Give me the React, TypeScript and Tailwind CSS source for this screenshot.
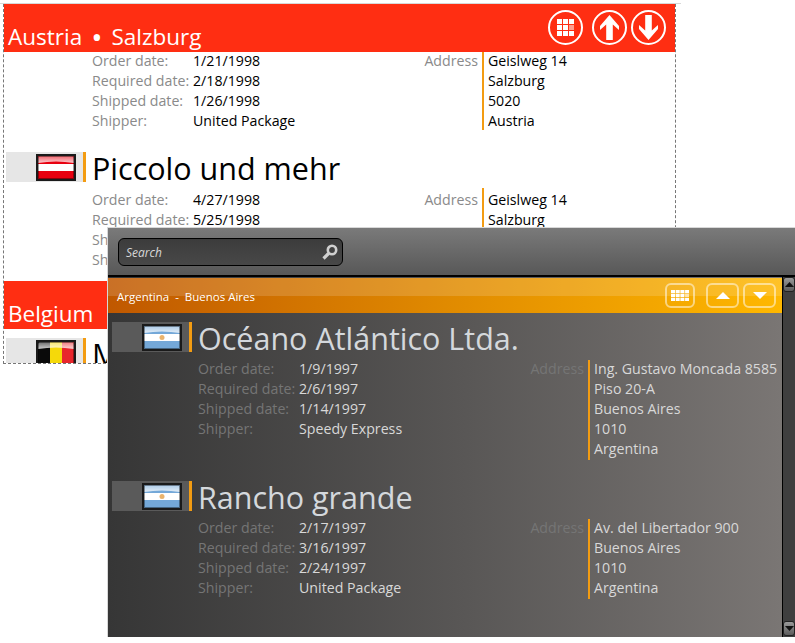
import { ReactNode } from "react";

type Order = {
  name: string;
  flag: "at" | "ar" | "be";
  dates: string[];
  shipper: string;
  address: string[];
};

const labels = ["Order date:", "Required date:", "Shipped date:", "Shipper:"];

function Flag({ type }: { type: "at" | "ar" | "be" }) {
  return (
    <svg width="40" height="27" viewBox="0 0 40 27" className="block shrink-0">
      <defs>
        <linearGradient id="gloss" x1="0" y1="0" x2="0" y2="1">
          <stop offset="0" stopColor="#fff" stopOpacity="0.4" />
          <stop offset="1" stopColor="#fff" stopOpacity="0.8" />
        </linearGradient>
      </defs>
      <rect width="40" height="27" fill="#1a1a1a" />
      {type === "at" && (
        <>
          <rect x="2" y="2" width="36" height="23" fill="#e8000f" />
          <rect x="2" y="10" width="36" height="7" fill="#fff" />
        </>
      )}
      {type === "ar" && (
        <>
          <rect x="2" y="2" width="36" height="23" fill="#74a8d8" />
          <rect x="2" y="10" width="36" height="7" fill="#fff" />
          <circle cx="20" cy="13.5" r="2.5" fill="#eab36c" />
        </>
      )}
      {type === "be" && (
        <>
          <rect x="2" y="2" width="12" height="23" fill="#0a0a0a" />
          <rect x="14" y="2" width="12" height="23" fill="#f5d90a" />
          <rect x="26" y="2" width="12" height="23" fill="#e8262c" />
        </>
      )}
      <path d="M4 2h32q2 0 2 2v5q-18 -3 -36 0v-5q0 -2 2 -2z" fill="url(#gloss)" />
      <rect x="2.5" y="2.5" width="35" height="22" fill="none" stroke="#000" strokeOpacity="0.4" />
    </svg>
  );
}

function OrderRow({ order, dark, titleOnly }: { order: Order; dark?: boolean; titleOnly?: boolean }) {
  const labelColor = dark ? "text-[#757575]" : "text-[#8a8a8a]";
  const valueColor = dark ? "text-[#d8d8d8]" : "text-black";
  return (
    <div>
      <div className="flex h-[30px] items-stretch">
        <div className={`flex w-[77px] items-center justify-end pr-[7px] ${dark ? "bg-[#5a5a5a]" : "bg-[#e6e6e6]"}`}>
          <Flag type={order.flag} />
        </div>
        <div className="w-[3px] bg-[#f39c12]" />
        <div className={`ml-[6px] whitespace-nowrap text-[30.5px] leading-[33px] ${dark ? "text-[#d4d8dc]" : "text-black"}`}>
          {order.name}
        </div>
      </div>
      {!titleOnly && (
        <DetailBlock
          order={order}
          labelColor={labelColor}
          valueColor={valueColor}
          top={dark ? "mt-[8px]" : "mt-[6px]"}
          shift={dark ? "-translate-y-[1px]" : "translate-y-[2px]"}
        />
      )}
    </div>
  );
}

function DetailBlock({
  order,
  labelColor,
  valueColor,
  top,
  shift,
}: {
  order: Order;
  labelColor: string;
  valueColor: string;
  top: string;
  shift: string;
}) {
  return (
    <div className={`ml-[86px] flex text-[14.2px] leading-[20px] ${top}`}>
      <div className={`w-[101px] whitespace-nowrap ${shift} ${labelColor}`}>
        {labels.map((l) => (
          <div key={l}>{l}</div>
        ))}
      </div>
      <div className={`w-[185px] whitespace-nowrap ${shift} ${valueColor}`}>
        {order.dates.map((d) => (
          <div key={d}>{d}</div>
        ))}
        <div>{order.shipper}</div>
      </div>
      <div className={`w-[100px] text-right ${shift} ${labelColor}`}>Address</div>
      <div className="ml-[4px] border-l-2 border-[#f39c12] pl-[4px]">
        <div className={`whitespace-nowrap ${shift} ${valueColor}`}>
          {order.address.map((a) => (
            <div key={a}>{a}</div>
          ))}
        </div>
      </div>
    </div>
  );
}

function CircleButton({ children, className }: { children: ReactNode; className?: string }) {
  return (
    <div className={`flex size-[35px] items-center justify-center rounded-full border-2 border-white ${className ?? ""}`}>
      {children}
    </div>
  );
}

function GridIcon({
  cols,
  rows,
  cell,
  cellH,
  hl,
}: {
  cols: number[];
  rows: number[];
  cell: number;
  cellH: number;
  hl: string;
}) {
  const w = cols[cols.length - 1] + cell;
  const h = rows[rows.length - 1] + cellH;
  return (
    <svg width={w} height={h} viewBox={`0 0 ${w} ${h}`} className="block">
      {rows.map((y, r) =>
        cols.map((x, c) => (
          <rect
            key={`${x}-${y}`}
            x={x}
            y={y}
            width={cell}
            height={cellH}
            fill={c === cols.length - 1 && r === 1 ? hl : "#fff"}
          />
        ))
      )}
    </svg>
  );
}

function GlossButton({ children, className }: { children: ReactNode; className?: string }) {
  return (
    <div className={`flex h-[25px] items-center justify-center rounded-[6px] border-2 border-[#ffffff80] ${className ?? ""}`}>
      {children}
    </div>
  );
}

function ScrollCap({ down }: { down?: boolean }) {
  return (
    <div className="flex h-[15px] items-center justify-center rounded-[3px] border border-[#222] bg-gradient-to-b from-[#9a9a9a] to-[#5c5c5c]">
      <svg width="9" height="5" viewBox="0 0 9 5" className="block">
        <path d={down ? "M0 0h9L4.5 5z" : "M0 5h9L4.5 0z"} fill="#111" />
      </svg>
    </div>
  );
}

const piccolo: Order = {
  name: "Piccolo und mehr",
  flag: "at",
  dates: ["4/27/1998", "5/25/1998", "5/5/1998"],
  shipper: "Speedy Express",
  address: ["Geislweg 14", "Salzburg", "5020", "Austria"],
};

const first: Order = {
  name: "",
  flag: "at",
  dates: ["1/21/1998", "2/18/1998", "1/26/1998"],
  shipper: "United Package",
  address: ["Geislweg 14", "Salzburg", "5020", "Austria"],
};

const argentina: Order[] = [
  {
    name: "Océano Atlántico Ltda.",
    flag: "ar",
    dates: ["1/9/1997", "2/6/1997", "1/14/1997"],
    shipper: "Speedy Express",
    address: ["Ing. Gustavo Moncada 8585", "Piso 20-A", "Buenos Aires", "1010", "Argentina"],
  },
  {
    name: "Rancho grande",
    flag: "ar",
    dates: ["2/17/1997", "3/16/1997", "2/24/1997"],
    shipper: "United Package",
    address: ["Av. del Libertador 900", "Buenos Aires", "1010", "Argentina"],
  },
];

export default function App() {
  return (
    <div className="relative h-[643px] w-[795px] overflow-hidden bg-white font-['Open_Sans',sans-serif]">
      {/* light window */}
      <div className="absolute left-0 top-[3px] h-[1px] w-[681px] bg-[#d8d8d8]" />
      <div className="absolute left-[3px] top-[4px] h-[360px] w-[673px] overflow-hidden border-x border-b border-dashed border-[#777]">
        <div className="relative z-10 flex h-[48px] items-start justify-between bg-[#ff2e12]">
          <div className="mt-[18px] ml-[4px] whitespace-nowrap text-[22.5px] leading-[30px] text-white">
            Austria
            <span className="mx-[9px] align-[-3px] text-[30px] leading-[0]">•</span>
            Salzburg
          </div>
          <div className="mt-[6px] mr-[9px] flex">
            <CircleButton className="mr-[9px]">
              <GridIcon cols={[0, 6, 12]} rows={[0, 6, 12]} cell={5} cellH={5} hl="#ff9d8f" />
            </CircleButton>
            <CircleButton className="mr-[4px]">
              <svg width="19" height="25" viewBox="0 0 19 25" className="block">
                <path d="M9.5 0L19 11V15L12.8 9.5V25H6.2V9.5L0 15V11z" fill="#fff" />
              </svg>
            </CircleButton>
            <CircleButton>
              <svg width="19" height="25" viewBox="0 0 19 25" className="block">
                <path d="M9.5 25L19 14V10L12.8 15.5V0H6.2V15.5L0 10V14z" fill="#fff" />
              </svg>
            </CircleButton>
          </div>
        </div>
        <div className="ml-[2px]">
          <DetailBlock
            order={first}
            labelColor="text-[#8a8a8a]"
            valueColor="text-black"
            top="-mt-[2px]"
            shift="translate-y-[1px]"
          />
          <div className="mt-[22px]">
            <OrderRow order={piccolo} />
          </div>
        </div>
        <div className="mt-[13px] h-[48px] bg-[#ff2e12]">
          <div className="pl-[4px] pt-[18px] text-[22.5px] leading-[30px] text-white">Belgium</div>
        </div>
        <div className="ml-[2px] mt-[9px]">
          <OrderRow order={{ ...piccolo, name: "Maison Dewey", flag: "be" }} titleOnly />
        </div>
      </div>

      {/* dark window */}
      <div className="absolute left-[107px] top-[227px] flex h-[410px] w-[688px] flex-col border-l border-t border-[#d8d8d8] bg-[#3a3a3a]">
        <div className="flex h-[47px] items-center bg-gradient-to-b from-[#7a7a7a] to-[#585858] pl-[10px]">
          <div className="flex h-[28px] w-[225px] items-center justify-between rounded-[6px] border border-black bg-gradient-to-b from-[#3c3c3c] to-[#484848] pl-[7px] pr-[4px] text-[12px] italic text-[#d8d8d8]">
            <span className="mt-[2px]">Search</span>
            <svg width="16" height="16" viewBox="0 0 16 16" className="block" fill="none" stroke="#d0d0d0">
              <circle cx="10" cy="6" r="4.2" strokeWidth="2.6" />
              <path d="M6.5 9.5L1.5 14.5" strokeWidth="3.2" />
            </svg>
          </div>
        </div>
        <div className="h-[2px] bg-black" />
        <div className="flex min-h-0 flex-1">
          <div className="min-w-0 flex-1 bg-gradient-to-r from-[#363636] to-[#7a7674]">
            <div className="relative mt-[1px] flex h-[35px] items-center justify-between bg-gradient-to-r from-[#c05800] via-[#e08a00] to-[#ffb800] pl-[9px] pr-[6px] text-[11.5px] text-white">
              <div className="absolute inset-x-0 top-0 h-[18px] bg-[#ffffff26]" />
              <div className="relative mt-[3px] whitespace-pre">Argentina  -  Buenos Aires</div>
              <div className="relative flex">
                <GlossButton className="mr-[11px] w-[30px]">
                  <GridIcon cols={[0, 4.7, 9.4, 14.1]} rows={[0, 4, 8]} cell={4} cellH={3.3} hl="#ffe6b0" />
                </GlossButton>
                <GlossButton className="mr-[4px] w-[33px]">
                  <svg width="14" height="7" viewBox="0 0 14 7" className="block">
                    <path d="M0 7h14L7 0z" fill="#fff" />
                  </svg>
                </GlossButton>
                <GlossButton className="w-[33px]">
                  <svg width="14" height="7" viewBox="0 0 14 7" className="block">
                    <path d="M0 0h14L7 7z" fill="#fff" />
                  </svg>
                </GlossButton>
              </div>
            </div>
            <div className="ml-[4px] mt-[9px] flex flex-col gap-[21px]">
              {argentina.map((o) => (
                <OrderRow key={o.name} order={o} dark />
              ))}
            </div>
          </div>
          <div className="flex w-[13px] flex-col justify-between border-l border-black bg-[#3f3f3f] pb-[1px]">
            <ScrollCap />
            <ScrollCap down />
          </div>
        </div>
      </div>
    </div>
  );
}
